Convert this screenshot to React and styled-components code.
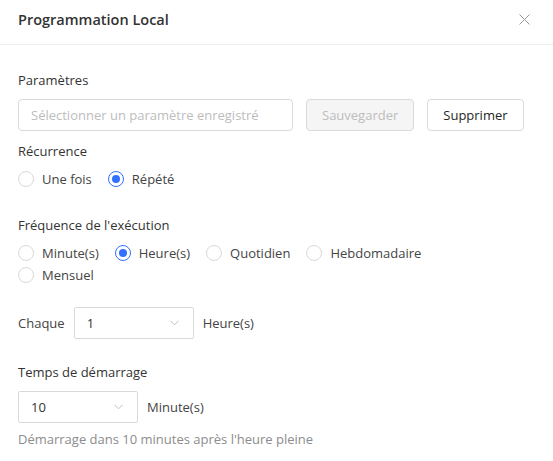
import React from "react";
import styled, { createGlobalStyle } from "styled-components";

const GlobalStyle = createGlobalStyle`
  * { box-sizing: border-box; }
  body {
    margin: 0;
    background: #ffffff;
    font-family: "Open Sans", "Noto Sans", sans-serif;
    font-size: 13px;
    color: #333333;
  }
`;

export default function App() {
  return (
    <>
      <GlobalStyle />
      <Modal>
        <Header>
          <Title>Programmation Local</Title>
          <Close aria-label="Fermer">
            <svg width="11" height="11" viewBox="0 0 11 11">
              <path d="M0.5 0.5 L10.5 10.5 M10.5 0.5 L0.5 10.5" stroke="#9a9a9a" strokeWidth="1" fill="none" />
            </svg>
          </Close>
        </Header>
        <Body>
          <Label>Paramètres</Label>
          <Row>
            <TextInput placeholder="Sélectionner un paramètre enregistré" />
            <Button disabled>Sauvegarder</Button>
            <Button>Supprimer</Button>
          </Row>

          <Label $top={9}>Récurrence</Label>
          <RadioGroup>
            <Radio label="Une fois" />
            <Radio label="Répété" checked />
          </RadioGroup>

          <Label $top={24}>Fréquence de l'exécution</Label>
          <RadioGroup $max={480}>
            <Radio label="Minute(s)" />
            <Radio label="Heure(s)" checked />
            <Radio label="Quotidien" />
            <Radio label="Hebdomadaire" />
            <Radio label="Mensuel" />
          </RadioGroup>

          <Row $top={21} $gap={9}>
            <Inline>Chaque</Inline>
            <Select value="1" />
            <Inline>Heure(s)</Inline>
          </Row>

          <Label $top={22}>Temps de démarrage</Label>
          <Row $gap={9}>
            <Select value="10" />
            <Inline>Minute(s)</Inline>
          </Row>
          <Help>Démarrage dans 10 minutes après l'heure pleine</Help>
        </Body>
      </Modal>
    </>
  );
}

function Radio({ label, checked }) {
  return (
    <RadioItem>
      <Circle $checked={checked} />
      <RadioText>{label}</RadioText>
    </RadioItem>
  );
}

function Select({ value }) {
  return (
    <SelectBox>
      <span>{value}</span>
      <svg width="9" height="6" viewBox="0 0 9 6">
        <path d="M0.5 0.8 L4.5 4.8 L8.5 0.8" stroke="#c0c0c0" strokeWidth="1" fill="none" />
      </svg>
    </SelectBox>
  );
}

const Modal = styled.div`
  width: 553px;
  min-height: 461px;
  background: #fff;
`;

const Header = styled.div`
  height: 45px;
  padding: 0 23px 6px 18px;
  display: flex;
  align-items: center;
  justify-content: space-between;
  border-bottom: 1px solid #ededed;
`;

const Title = styled.h1`
  margin: 0;
  font-size: 14.5px;
  font-weight: 600;
  color: #333;
`;

const Close = styled.button`
  border: 0;
  background: none;
  padding: 0;
  display: flex;
  cursor: pointer;
`;

const Body = styled.div`
  padding: 24px 18px 18px;
  display: flex;
  flex-direction: column;
`;

const Label = styled.div`
  margin-top: ${(p) => p.$top || 0}px;
  line-height: 22px;
  margin-bottom: 8px;
  color: #333;
`;

const Row = styled.div`
  display: flex;
  align-items: center;
  gap: ${(p) => p.$gap || 13}px;
  margin-top: ${(p) => p.$top || 0}px;
`;

const TextInput = styled.input`
  width: 275px;
  height: 32px;
  padding: 0 12px;
  border: 1px solid #d9d9d9;
  border-radius: 4px;
  font: inherit;
  color: #333;
  outline: none;
  &::placeholder { color: #bdbdbd; }
`;

const Button = styled.button`
  height: 32px;
  padding: 0 15px;
  border: 1px solid #d9d9d9;
  border-radius: 4px;
  background: #fff;
  font: inherit;
  color: #262626;
  &:disabled {
    background: #f5f5f5;
    color: #bdbdbd;
  }
`;

const RadioGroup = styled.div`
  display: flex;
  flex-wrap: wrap;
  max-width: ${(p) => (p.$max ? `${p.$max}px` : "none")};
  margin-top: -2px;
`;

const RadioItem = styled.label`
  display: flex;
  align-items: center;
  height: 22px;
  margin-right: 8px;
  cursor: pointer;
`;

const Circle = styled.span`
  width: 16px;
  height: 16px;
  border-radius: 50%;
  border: 1px solid ${(p) => (p.$checked ? "#3370ff" : "#d9d9d9")};
  position: relative;
  &::after {
    content: "";
    display: ${(p) => (p.$checked ? "block" : "none")};
    position: absolute;
    left: 3px;
    top: 3px;
    width: 8px;
    height: 8px;
    border-radius: 50%;
    background: #3370ff;
  }
`;

const RadioText = styled.span`
  padding: 0 8px;
  color: #444;
`;

const Inline = styled.span`
  color: #444;
`;

const SelectBox = styled.div`
  width: 120px;
  height: 32px;
  padding: 0 14px 0 12px;
  border: 1px solid #d9d9d9;
  border-radius: 2px;
  display: flex;
  align-items: center;
  justify-content: space-between;
  color: #333;
`;

const Help = styled.div`
  margin-top: 5px;
  line-height: 22px;
  color: #8c8c8c;
`;
